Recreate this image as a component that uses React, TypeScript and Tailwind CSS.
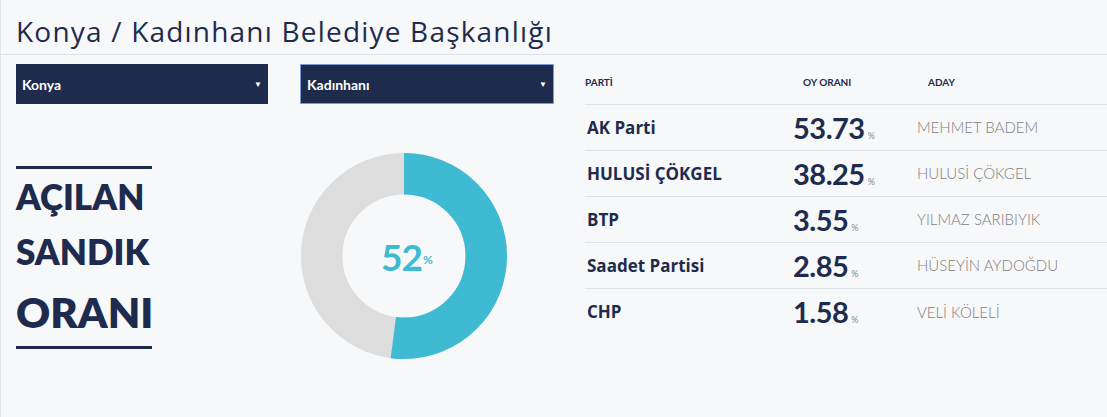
import React from "react";

const rows = [
  { party: "AK Parti", value: "53.73", cand: "MEHMET BADEM" },
  { party: "HULUSİ ÇÖKGEL", value: "38.25", cand: "HULUSİ ÇÖKGEL" },
  { party: "BTP", value: "3.55", cand: "YILMAZ SARIBIYIK" },
  { party: "Saadet Partisi", value: "2.85", cand: "HÜSEYİN AYDOĞDU" },
  { party: "CHP", value: "1.58", cand: "VELİ KÖLELİ" },
];

function Donut() {
  const r = 82.25;
  const c = 2 * Math.PI * r;
  const pct = 52;
  return (
    <div className="relative w-[206px] h-[206px]">
      <svg width="206" height="206" viewBox="0 0 206 206">
        <circle cx="103" cy="103" r={r} fill="none" stroke="#dddddd" strokeWidth="41.5" />
        <circle
          cx="103"
          cy="103"
          r={r}
          fill="none"
          stroke="#3fbad3"
          strokeWidth="41.5"
          strokeDasharray={`${(c * pct) / 100} ${c}`}
          transform="rotate(-90 103 103)"
        />
      </svg>
      <div className="absolute inset-0 flex items-center justify-center pl-[6px]">
        <span className="text-[37px] font-bold leading-none text-[#3fbad3] tracking-[-1px]">52</span>
        <span className="text-[12px] font-bold leading-none text-[#3fbad3] mt-[8px] ml-[1px]">%</span>
      </div>
    </div>
  );
}

function Select({ label, focused }: { label: string; focused?: boolean }) {
  return (
    <div
      className={
        focused
          ? "flex items-center justify-between h-[40px] w-[254px] bg-[#1e2b4d] border border-[#7b9ad6] pl-[6px] pr-[6px]"
          : "flex items-center justify-between h-[40px] w-[252px] bg-[#1e2b4d] pl-[6px] pr-[6px]"
      }
    >
      <span className="text-white text-[14px] font-bold">{label}</span>
      <span className="text-white text-[8px] leading-none">▼</span>
    </div>
  );
}

export default function App() {
  return (
    <div
      className="w-[1107px] h-[417px] bg-[#f7f8fa] border-l border-[#e2e4e8] overflow-hidden text-[#1e2b4d]"
      style={{ fontFamily: "Lato, 'Open Sans', sans-serif" }}
    >
      <div className="h-[55px] border-b border-[#dfe2e6] pl-[15px] flex items-end pb-[9px]">
        <h1
          className="text-[28px] font-normal leading-none tracking-[1.2px]"
          style={{ fontFamily: "'Open Sans', sans-serif" }}
        >
          Konya / Kadınhanı Belediye Başkanlığı
        </h1>
      </div>
      <div className="flex pl-[15px]">
        <div className="flex flex-col w-[569px]">
          <div className="flex gap-[32px] mt-[9px]">
            <Select label="Konya" />
            <Select label="Kadınhanı" focused />
          </div>
          <div className="flex items-start">
            <div className="mt-[62px] w-[136px] border-t-[3px] border-b-[3px] border-[#1e2b4d] flex flex-col">
              <span className="text-[35px] font-extrabold leading-[54px]">AÇILAN</span>
              <span className="text-[35px] font-extrabold leading-[56px]">SANDIK</span>
              <span className="text-[42px] font-extrabold leading-[67px]">ORANI</span>
            </div>
            <div className="mt-[49px] ml-[149px]">
              <Donut />
            </div>
          </div>
        </div>
        <div className="flex-1 mt-[5px]">
          <div className="flex h-[45px] items-center border-b border-[#dfe2e6] text-[10px] font-bold">
            <div className="w-[208px]">PARTİ</div>
            <div className="w-[124px] pl-[10px]">OY ORANI</div>
            <div className="pl-[11px]">ADAY</div>
          </div>
          {rows.map((r, i) => (
            <div
              key={r.party}
              className={
                i < rows.length - 1
                  ? "flex h-[46px] items-center border-b border-[#dfe2e6]"
                  : "flex h-[46px] items-center"
              }
            >
              <div className="w-[208px] pl-[2px] text-[17px] font-bold" style={{ fontFamily: "'Open Sans', sans-serif" }}>
                {r.party}
              </div>
              <div className="w-[124px] flex items-baseline">
                <span className="text-[29px] font-bold leading-none tracking-[-0.5px]">{r.value}</span>
                <span className="text-[9px] text-[#888] ml-[3px]">%</span>
              </div>
              <div className="text-[15px] font-light text-[#808080]">{r.cand}</div>
            </div>
          ))}
        </div>
      </div>
    </div>
  );
}
